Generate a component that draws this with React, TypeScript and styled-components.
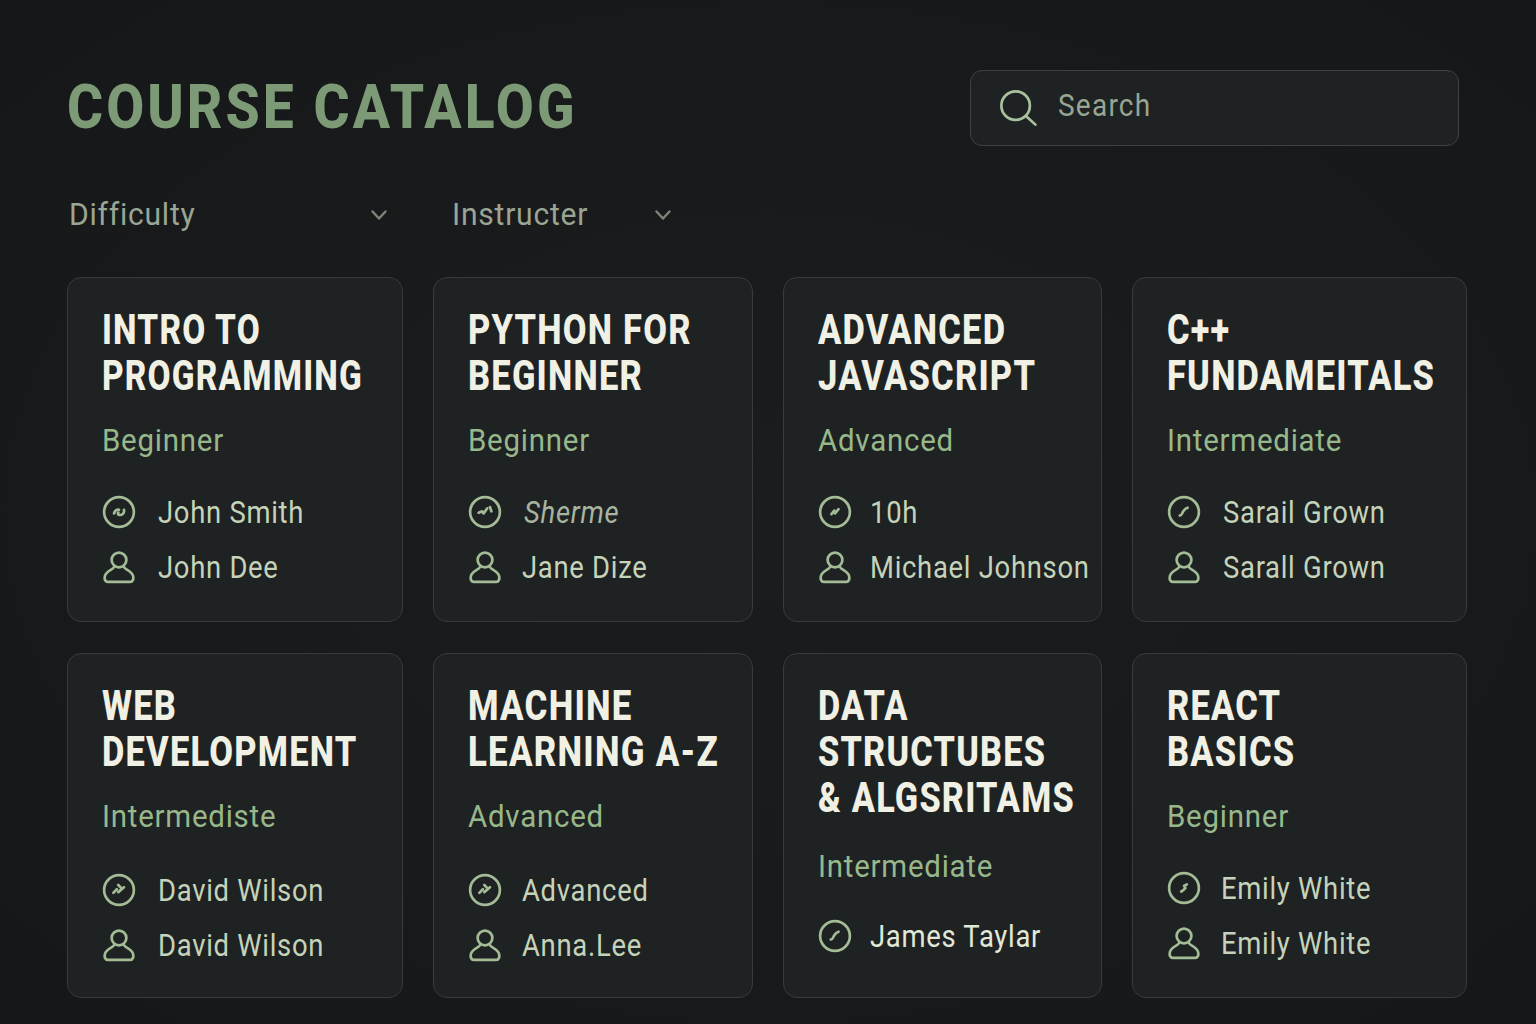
import React from "react";
import styled, { createGlobalStyle } from "styled-components";

type Course = {
  title: string[];
  level: string;
  fit?: number;
  gap?: number;
  levelGap?: number;
  rowsGap?: number;
  rows: { kind: "time" | "person"; text: string; tone?: "bright" | "dim"; mark?: string; gap?: number }[];
};

const marks = {
  swirl: "M8.500 13c.5-2 2-3 3.500-2.500M15.500 10.500c.5 2.500-1.500 4-3.500 3.500-.8-.2-1-1-.5-1.500",
  zig: "M7.500 12.500l2.500-1 1 1.500 2.500-3.500M15.500 8.500l1 3",
  spark: "M9.500 13.500l2-2.500.5 2 2.500-3",
  check: "M9 14.500c1.500 0 1.500-1.500 2.500-3s1.500-2 3-2.500",
  burst: "M8 14l2.500-2.500M11.500 8.500l2 2M11.500 13.500l4-3.500",
  slash: "M10 14.500l1.500-1 1.500-1.500-1-1.500 2-1",
};

const courses: Course[] = [
  {
    title: ["INTRO TO", "PROGRAMMING"],
    level: "Beginner",
    fit: 0.795,
    rows: [
      { kind: "time", text: "John Smith", mark: marks.swirl },
      { kind: "person", text: "John Dee" },
    ],
  },
  {
    title: ["PYTHON FOR", "BEGINNER"],
    level: "Beginner",
    rows: [
      { kind: "time", text: "Sherme", tone: "dim", mark: marks.zig },
      { kind: "person", text: "Jane Dize", gap: 20 },
    ],
  },
  {
    title: ["ADVANCED", "JAVASCRIPT"],
    level: "Advanced",
    gap: 18,
    rows: [
      { kind: "time", text: "10h", mark: marks.spark },
      { kind: "person", text: "Michael Johnson" },
    ],
  },
  {
    title: ["C++", "FUNDAMEITALS"],
    level: "Intermediate",
    rows: [
      { kind: "time", text: "Sarail Grown", mark: marks.check },
      { kind: "person", text: "Sarall Grown" },
    ],
  },
  {
    title: ["WEB", "DEVELOPMENT"],
    level: "Intermediste",
    rowsGap: 33,
    rows: [
      { kind: "time", text: "David Wilson", mark: marks.burst },
      { kind: "person", text: "David Wilson" },
    ],
  },
  {
    title: ["MACHINE", "LEARNING A-Z"],
    level: "Advanced",
    fit: 0.83,
    rowsGap: 33,
    gap: 20,
    rows: [
      { kind: "time", text: "Advanced", mark: marks.burst },
      { kind: "person", text: "Anna.Lee" },
    ],
  },
  {
    title: ["DATA", "STRUCTUBES", "& ALGSRITAMS"],
    level: "Intermediate",
    fit: 0.815,
    levelGap: 26,
    rowsGap: 29,
    gap: 18,
    rows: [{ kind: "time", text: "James Taylar", tone: "bright", mark: marks.check }],
  },
  {
    title: ["REACT", "BASICS"],
    level: "Beginner",
    gap: 20,
    rows: [
      { kind: "time", text: "Emily White", mark: marks.slash },
      { kind: "person", text: "Emily White" },
    ],
  },
];

const GlobalStyle = createGlobalStyle`
  html, body {
    margin: 0;
    background: #17191b;
  }
`;

const Page = styled.div`
  box-sizing: border-box;
  width: 1536px;
  height: 1024px;
  overflow: hidden;
  padding: 70px 69px 0 67px;
  font-family: "Roboto", sans-serif;
  background: radial-gradient(ellipse at center, #1a1c1e 0%, #17191b 70%, #151719 100%);
`;

const Header = styled.header`
  display: flex;
  justify-content: space-between;
  align-items: center;
  height: 76px;
  padding-right: 8px;
`;

const Title = styled.h1`
  margin: 0 0 3px;
  font-size: 62px;
  line-height: 70px;
  font-weight: 800;
  letter-spacing: 3.4px;
  color: #7c9a76;
  white-space: nowrap;
  transform: scaleX(0.89);
  transform-origin: left center;
`;

const SearchBox = styled.div`
  box-sizing: border-box;
  width: 489px;
  height: 76px;
  display: flex;
  align-items: center;
  gap: 21px;
  padding: 0 28px;
  background: #1e2223;
  border: 1px solid #3d4241;
  border-radius: 12px;
`;

const SearchLabel = styled.span`
  display: block;
  margin-bottom: 6px;
  color: #98a592;
  font-size: 32px;
  letter-spacing: 1.4px;
  transform: scaleX(0.875);
  transform-origin: left center;
`;

const Filters = styled.div`
  display: flex;
  gap: 63px;
  height: 131px;
  padding: 0 2px;
`;

const Filter = styled.div<{ $width: number }>`
  box-sizing: border-box;
  width: ${(p) => p.$width}px;
  height: 136px;
  display: flex;
  justify-content: space-between;
  align-items: flex-start;
  padding-top: 48px;
  font-size: 32px;
  line-height: 40px;
  letter-spacing: 0.8px;
  color: #9aa594;
`;

const FilterLabel = styled.span`
  display: block;
  transform: scaleX(0.94);
  transform-origin: left center;
`;

const Chevron = styled.svg`
  width: 20px;
  height: 20px;
  margin-top: 11px;
`;

const Grid = styled.div`
  display: grid;
  grid-template-columns: 336px 320px 319px 335px;
  grid-template-rows: 345px 345px;
  gap: 31px 30px;
`;

const Card = styled.article`
  box-sizing: border-box;
  padding: 29px 14px 0 34px;
  background: #1e2223;
  border: 1px solid #363b3b;
  border-radius: 14px;
`;

const CardTitle = styled.h2<{ $fit?: number }>`
  margin: 0;
  font-size: 42px;
  line-height: 46px;
  font-weight: 800;
  letter-spacing: 1.5px;
  color: #f1f0e4;
  white-space: nowrap;
  transform: scaleX(${(p) => p.$fit ?? 0.82});
  transform-origin: left center;
`;

const Level = styled.div<{ $gap?: number }>`
  margin-top: ${(p) => p.$gap ?? 22}px;
  font-size: 31px;
  line-height: 40px;
  letter-spacing: 0.8px;
  color: #98b88c;
  transform: scaleX(0.95);
  transform-origin: left center;
`;

const Rows = styled.div<{ $gap?: number }>`
  display: flex;
  flex-direction: column;
  gap: 15px;
  margin-top: ${(p) => p.$gap ?? 31}px;
`;

const Row = styled.div<{ $gap: number }>`
  display: flex;
  align-items: center;
  gap: ${(p) => p.$gap}px;
  height: 40px;
`;

const Icon = styled.svg`
  width: 34px;
  height: 38px;
  flex: none;
  color: #a3bc96;
`;

const RowText = styled.span<{ $tone?: "bright" | "dim" }>`
  display: block;
  font-size: 31px;
  letter-spacing: 0.8px;
  white-space: nowrap;
  color: ${(p) => (p.$tone === "bright" ? "#e2e8d8" : p.$tone === "dim" ? "#a8b4a0" : "#c5d3ba")};
  font-style: ${(p) => (p.$tone === "dim" ? "italic" : "normal")};
  transform: scaleX(0.885);
  transform-origin: left center;
`;

const TimeIcon = ({ mark }: { mark?: string }) => (
  <Icon viewBox="0 0 24 24" fill="none" stroke="currentColor" strokeWidth="1.900" strokeLinecap="round" strokeLinejoin="round">
    <circle cx="12" cy="12" r="10.500" />
    {mark && <path d={mark} />}
  </Icon>
);

const PersonIcon = () => (
  <Icon viewBox="0 0 24 24" fill="none" stroke="currentColor" strokeWidth="1.900" strokeLinecap="round" strokeLinejoin="round">
    <circle cx="12" cy="7" r="5.200" />
    <path d="M8.500 12c-.5 2-5.500 2.500-6.500 6.500-.4 2 .3 4 2 4h16c1.700 0 2.400-2 2-4-1-4-6-4.500-6.500-6.500" />
  </Icon>
);

const App = () => (
  <Page>
    <GlobalStyle />
    <Header>
      <Title>COURSE CATALOG</Title>
      <SearchBox>
        <svg width="38" height="38" viewBox="0 0 24 24" fill="none" stroke="#a9c29d" strokeWidth="1.700" strokeLinecap="round">
          <circle cx="10.500" cy="10.500" r="9" />
          <path d="M17 17l6 5.500" />
        </svg>
        <SearchLabel>Search</SearchLabel>
      </SearchBox>
    </Header>
    <Filters>
      {[
        { label: "Difficulty", width: 320 },
        { label: "Instructer", width: 221 },
      ].map((f) => (
        <Filter key={f.label} $width={f.width}>
          <FilterLabel>{f.label}</FilterLabel>
          <Chevron viewBox="0 0 20 20" fill="none" stroke="#7d8779" strokeWidth="2.400" strokeLinecap="round" strokeLinejoin="round">
            <path d="M3.500 6.500l6.500 7 6.500-7" />
          </Chevron>
        </Filter>
      ))}
    </Filters>
    <Grid>
      {courses.map((c) => (
        <Card key={c.title.join(" ")}>
          <CardTitle $fit={c.fit}>
            {c.title.map((t) => (
              <div key={t}>{t}</div>
            ))}
          </CardTitle>
          <Level $gap={c.levelGap}>{c.level}</Level>
          <Rows $gap={c.rowsGap}>
            {c.rows.map((r, i) => (
              <Row key={i} $gap={r.gap ?? c.gap ?? 22}>
                {r.kind === "time" ? <TimeIcon mark={r.mark} /> : <PersonIcon />}
                <RowText $tone={r.tone}>{r.text}</RowText>
              </Row>
            ))}
          </Rows>
        </Card>
      ))}
    </Grid>
  </Page>
);

export default App;
